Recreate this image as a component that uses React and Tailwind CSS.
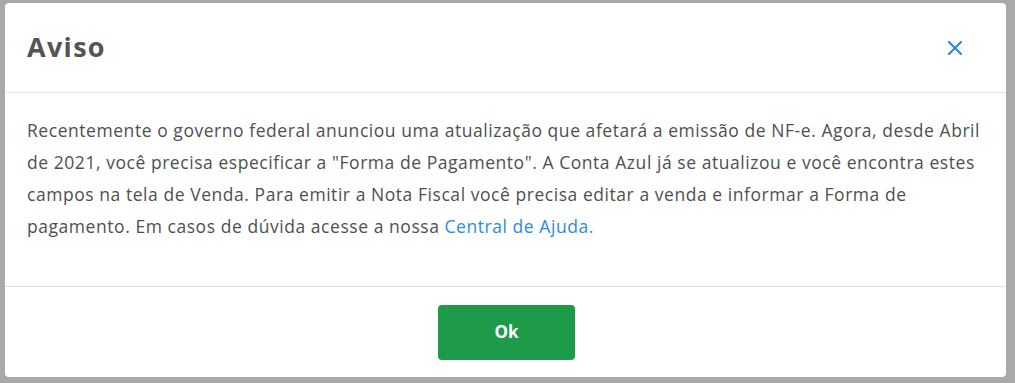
import React from 'react'

const App = () => {
  return (
    <div className="w-[1015px] h-[383px] bg-[#a9a9a9] pl-[5px] pt-[3px] overflow-hidden" style={{ fontFamily: '"Open Sans", "Liberation Sans", sans-serif' }}>
      <div className="w-[1001px] h-[374px] bg-white rounded-[4px] flex flex-col">
        <div className="h-[90px] flex items-center justify-between pl-[22px] pr-[43px] border-b border-[#dbe3ed]">
          <h2 className="text-[27px] font-bold text-[#545454] tracking-[1.3px]">Aviso</h2>
          <button className="text-[#2d88e6]">
            <svg width="16" height="16" viewBox="0 0 16 16" fill="none" stroke="currentColor" strokeWidth="2.2" strokeLinecap="round">
              <path d="M2 2 L14 14 M14 2 L2 14" />
            </svg>
          </button>
        </div>
        <div className="flex-1 pl-[22px] pr-[10px] pt-[21px] text-[17.5px] leading-[32px] tracking-[0.55px] text-[#4f4f4f] whitespace-nowrap">
          Recentemente o governo federal anunciou uma atualização que afetará a emissão de NF-e. Agora, desde Abril<br />
          de 2021, você precisa especificar a "Forma de Pagamento". A Conta Azul já se atualizou e você encontra estes<br />
          campos na tela de Venda. Para emitir a Nota Fiscal você precisa editar a venda e informar a Forma de<br />
          pagamento. Em casos de dúvida acesse a nossa <a className="text-[#2b8ae6]">Central de Ajuda.</a>
        </div>
        <div className="h-[91px] border-t border-[#dbe3ed] flex items-center justify-center">
          <button className="w-[137px] h-[55px] ml-[2px] bg-[#1e9b48] rounded-[4px] text-white font-bold text-[17px]">Ok</button>
        </div>
      </div>
    </div>
  )
}

export default App
